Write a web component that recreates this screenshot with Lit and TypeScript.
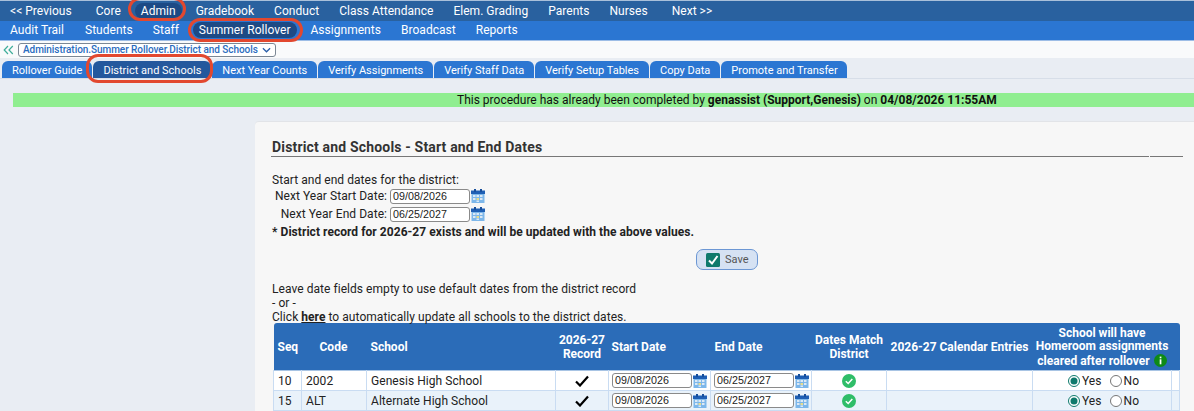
import { LitElement, html, css, svg } from "lit";
import { customElement } from "lit/decorators.js";

const calIcon = html`<svg class="cal" viewBox="0 0 14 14" width="14" height="14"><rect x="0.5" y="2" width="13" height="12" fill="#7db7ea"/><rect x="0" y="1.5" width="14" height="3.5" fill="#1f5fb4"/><rect x="3" y="0" width="2" height="3" fill="#174f9c"/><rect x="9" y="0" width="2" height="3" fill="#174f9c"/><g fill="#dbe9f6"><rect x="2" y="6" width="2.5" height="2"/><rect x="5.5" y="6" width="2.5" height="2"/><rect x="9" y="6" width="2.5" height="2"/><rect x="2" y="9" width="2.5" height="2"/><rect x="9" y="9" width="2.5" height="2"/><rect x="5.5" y="11.5" width="2.5" height="1.5"/></g><rect x="5.5" y="9" width="2.5" height="2" fill="#e6dd8e"/></svg>`;

const checkMark = html`<svg viewBox="0 0 14 12" width="14" height="12"><path d="M1 6.5 L5 10.5 L13 1.5" fill="none" stroke="#000" stroke-width="2.2"/></svg>`;
const greenOk = html`<svg viewBox="0 0 14 14" width="14" height="14"><circle cx="7" cy="7" r="7" fill="#2fbd68"/><path d="M3.8 7.2 L6.2 9.5 L10.3 5" fill="none" stroke="#fff" stroke-width="1.5"/></svg>`;

const radio = (on: boolean) => html`<svg class="radio" viewBox="0 0 12 12" width="12" height="12"><circle cx="6" cy="6" r="5.5" fill="#fff" stroke="${on ? "#0f7a6c" : "#767676"}" stroke-width="1"/>${on ? svg`<circle cx="6" cy="6" r="3.5" fill="#0f7a6c"/>` : ""}</svg>`;

const schools = [
  { seq: "10", code: "2002", name: "Genesis High School" },
  { seq: "15", code: "ALT", name: "Alternate High School" },
];

@customElement("app-root")
export class AppRoot extends LitElement {
  static styles = css`
    :host { display: block; width: 1194px; height: 411px; overflow: hidden; background: #e9edf3; position: relative; font-family: Roboto, "Liberation Sans", sans-serif; font-size: 12px; color: #222; }
    .nav { display: flex; align-items: center; color: #fff; font-size: 12px; letter-spacing: 0.03px; white-space: nowrap; }
    .nav span { display: block; line-height: 16px; }
    .nav span.on { background: #1d4a85; border-radius: 8px; box-shadow: 6px 0 0 #1d4a85, -6px 0 0 #1d4a85; }
    .top { height: 21px; background: #29619f; border-top: 1px solid #a9c0da; box-sizing: border-box; padding-left: 10px; }
    .sub { height: 20px; background: #2b76d2; border-bottom: 1px solid #9dbde6; box-sizing: border-box; padding: 0 0 1px 10px; }
    .crumb { height: 17px; background: #f9fafb; display: flex; align-items: center; padding-left: 3px; gap: 4px; box-sizing: border-box; }
    .chev { display: block; }
    .select { display: flex; align-items: center; height: 14px; box-sizing: border-box; border: 1px solid #7b8794; border-radius: 3px; background: #fff; color: #2a6cc0; font-size: 10px; font-weight: 500; padding: 0 4px 0 4px; gap: 4px; white-space: nowrap; letter-spacing: -0.05px; }
    .tabs { display: flex; height: 20px; padding-left: 2px; gap: 1px; align-items: flex-end; border-bottom: 1px solid #d7dee8; box-sizing: content-box; }
    .tab { height: 17px; display: flex; align-items: center; background: #2b76d2; color: #fff; font-size: 11px; border-radius: 6px 6px 0 0; padding: 1px 10px 0; white-space: nowrap; box-sizing: border-box; }
    .tab:last-child { padding-right: 9px; }
    .tab.active { background: #24589d; }
    .banner { margin: 14px 0 0 13px; height: 14px; background: #90ee90; font-size: 12px; color: #111; display: flex; line-height: 14px; white-space: nowrap; padding-left: 444px; }
    .card { margin: 14px 0 0 255px; height: 290px; background: #f7f7f7; border-top-left-radius: 4px; border-top: 1px solid #e2e4e8; padding: 0 11px 0 17px; box-sizing: border-box; }
    .title { margin-top: 16px; font-weight: 700; font-size: 14px; letter-spacing: 0.17px; line-height: 18px; color: #333; }
    .rule { display: flex; gap: 1px; height: 1px; margin-left: -1px; }
    .rule i { display: block; height: 1px; background: #777; }
    .rule i:first-child { flex: 1; }
    .rule i:last-child { width: 33px; }
    .text { font-size: 12px; letter-spacing: 0.05px; line-height: 14px; white-space: nowrap; }
    .block { margin-top: 16px; }
    .daterow { display: flex; align-items: center; height: 18px; }
    .daterow label { display: block; text-align: right; width: 115px; margin-right: 3px; }
    .input { width: 80px; height: 15px; box-sizing: border-box; border: 1px solid #8a8a8a; border-radius: 3px; background: #fff; font-family: "Liberation Sans", Arial, sans-serif; font-size: 10.7px; line-height: 13px; padding-left: 2px; color: #222; flex: none; }
    .cal { display: block; margin-left: 1px; flex: none; }
    .bold { font-weight: 700; margin-top: 2px; }
    .savewrap { display: flex; justify-content: center; margin-top: 10px; width: 910px; }
    .save { height: 21px; width: 62px; box-sizing: border-box; border: 1px solid #6c97d4; border-radius: 7px; background: #d6e2f3; display: flex; align-items: center; padding-left: 9px; gap: 5px; font-size: 11px; color: #555; }
    .info { margin-top: 12px; }
    .info a { font-weight: 700; color: #222; text-decoration: underline; }
    table { border-collapse: collapse; table-layout: fixed; width: 906px; margin: -1px 0 0 1px; }
    th { background: #2b6cb8; color: #fff; font-size: 12px; font-weight: 700; line-height: 13.5px; padding: 2px 0 0; height: 45px; text-align: center; white-space: nowrap; }
    th:first-child { border-top-left-radius: 3px; }
    th:last-child { border-top-right-radius: 3px; }
    th.l { text-align: left; padding-left: 4px; }
    th.code { padding-left: 18px; }
    th.sd { padding-left: 3px; }
    thead tr { border-bottom: 1px solid #a8c4e4; }
    td { height: 20px; padding: 0; border-right: 1px solid #c9dcf2; border-bottom: 1px solid #c9dcf2; white-space: nowrap; font-size: 12px; letter-spacing: 0.05px; box-sizing: border-box; }
    td:first-child { border-left: 1px solid #c9dcf2; }
    td.l { padding-left: 4px; }
    tr.odd td { background: #fff; }
    tr.even td { background: #e9f2fa; }
    .c { display: flex; justify-content: center; align-items: center; }
    .date { display: flex; align-items: center; padding-left: 3px; }
    .yn { display: flex; justify-content: center; align-items: center; gap: 2px; padding-left: 3px; }
    .yn span { line-height: 13px; padding-top: 2px; }
    .yn span:nth-of-type(1) { margin-right: 6px; }
    .radio { display: block; flex: none; }
    .i { display: inline-block; vertical-align: -2px; margin-left: 1px; }
    .oval { position: absolute; border: 3px solid #e2482f; box-sizing: border-box; border-radius: 12px; pointer-events: none; }
    .o1 { left: 128px; top: -3px; width: 58px; height: 24px; }
    .o2 { left: 188px; top: 18px; width: 115px; height: 24px; }
    .o3 { left: 86px; top: 54px; width: 127px; height: 29px; }
  `;

  render() {
    const top = [["<< Previous", 24], ["Core", 20], ["Admin", 20], ["Gradebook", 20], ["Conduct", 20], ["Class Attendance", 20], ["Elem. Grading", 20], ["Parents", 20], ["Nurses", 24], ["Next >>", 0]] as [string, number][];
    const sub = [["Audit Trail", 21], ["Students", 20], ["Staff", 20], ["Summer Rollover", 20], ["Assignments", 20], ["Broadcast", 20], ["Reports", 0]] as [string, number][];
    const tabs = ["Rollover Guide", "District and Schools", "Next Year Counts", "Verify Assignments", "Verify Staff Data", "Verify Setup Tables", "Copy Data", "Promote and Transfer"];
    return html`
      <div class="nav top">${top.map(([t, g]) => html`<span class="${t === "Admin" ? "on" : ""}" style="margin-right:${g}px">${t}</span>`)}</div>
      <div class="nav sub">${sub.map(([t, g]) => html`<span class="${t === "Summer Rollover" ? "on" : ""}" style="margin-right:${g}px">${t}</span>`)}</div>
      <div class="crumb">
        <svg class="chev" viewBox="0 0 11 10" width="11" height="10"><path d="M5 1 L1.2 5 L5 9 M9.8 1 L6 5 L9.8 9" fill="none" stroke="#3fae9a" stroke-width="1.2"/></svg>
        <div class="select">Administration.Summer Rollover.District and Schools
          <svg viewBox="0 0 10 6" width="9" height="6"><path d="M1 1 L5 5 L9 1" fill="none" stroke="#2a5ea8" stroke-width="1.4"/></svg>
        </div>
      </div>
      <div class="tabs">${tabs.map((t, i) => html`<div class="tab ${i === 1 ? "active" : ""}">${t}</div>`)}</div>
      <div class="banner"><span>This procedure has already been completed by <b>genassist (Support,Genesis)</b> on <b>04/08/2026 11:55AM</b></span></div>
      <div class="card">
        <div class="title">District and Schools - Start and End Dates</div>
        <div class="rule"><i></i><i></i></div>
        <div class="text block">Start and end dates for the district:</div>
        <div class="text daterow"><label>Next Year Start Date:</label><div class="input">09/08/2026</div>${calIcon}</div>
        <div class="text daterow"><label>Next Year End Date:</label><div class="input">06/25/2027</div>${calIcon}</div>
        <div class="text bold">* District record for 2026-27 exists and will be updated with the above values.</div>
        <div class="savewrap"><div class="save">
          <svg viewBox="0 0 14 14" width="14" height="14"><rect width="14" height="14" rx="1.5" fill="#0f7a6c"/><path d="M3 7.5 L6 10.5 L11.5 3" fill="none" stroke="#fff" stroke-width="2"/></svg>
          <span>Save</span>
        </div></div>
        <div class="text info">Leave date fields empty to use default dates from the district record<br>- or -<br>Click <a>here</a> to automatically update all schools to the district dates.</div>
        <table>
          <colgroup><col style="width:28px"><col style="width:65px"><col style="width:189px"><col style="width:53px"><col style="width:102px"><col style="width:101px"><col style="width:75px"><col style="width:146px"><col style="width:139px"><col style="width:8px"></colgroup>
          <thead><tr>
            <th class="l">Seq</th><th class="l code">Code</th><th class="l">School</th>
            <th>2026-27<br>Record</th><th class="l sd">Start Date</th><th class="l">End Date</th><th>Dates Match<br>District</th><th>2026-27 Calendar Entries</th>
            <th>School will have<br>Homeroom assignments<br>cleared after rollover <svg class="i" viewBox="0 0 13 13" width="13" height="13"><circle cx="6.5" cy="6.5" r="6.5" fill="#0e8a16"/><rect x="5.7" y="5.3" width="1.7" height="5" fill="#fff"/><rect x="5.7" y="2.6" width="1.7" height="1.7" fill="#fff"/></svg></th><th></th>
          </tr></thead>
          <tbody>
            ${schools.map((s, i) => html`<tr class="${i % 2 ? "even" : "odd"}">
              <td class="l">${s.seq}</td><td class="l">${s.code}</td><td class="l">${s.name}</td>
              <td><div class="c">${checkMark}</div></td>
              <td><div class="date"><div class="input">09/08/2026</div>${calIcon}</div></td>
              <td><div class="date"><div class="input">06/25/2027</div>${calIcon}</div></td>
              <td><div class="c">${greenOk}</div></td>
              <td></td>
              <td><div class="yn">${radio(true)}<span>Yes</span>${radio(false)}<span>No</span></div></td>
              <td></td>
            </tr>`)}
          </tbody>
        </table>
      </div>
      <div class="oval o1"></div>
      <div class="oval o2"></div>
      <div class="oval o3"></div>
    `;
  }
}
